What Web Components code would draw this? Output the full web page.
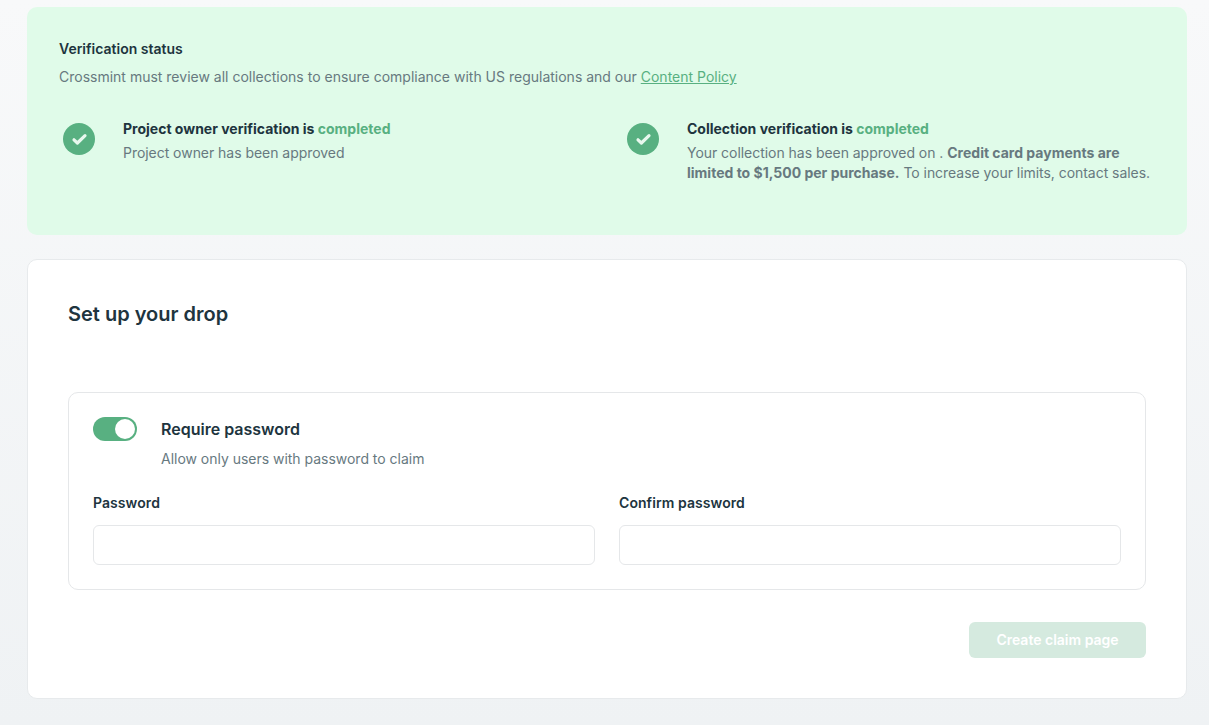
<!DOCTYPE html>
<html>
<head>
<meta charset="utf-8">
<title>Set up your drop</title>
<style>
html, body { height: 100%; }
body {
  margin: 0;
  height: 725px;
  overflow: hidden;
  box-sizing: border-box;
  padding: 7px 22px 0 27px;
  background: linear-gradient(180deg, #f8f9fa 0%, #eff2f4 100%);
  font-family: Inter, "Liberation Sans", sans-serif;
  color: #20343e;
}
</style>
</head>
<body>
<verification-banner>
  <status-item heading="Project owner verification is">Project owner has been approved</status-item>
  <status-item heading="Collection verification is">Your collection has been approved on . <b>Credit card payments are</b> <b>limited to $1,500 per purchase.</b> To increase your limits, contact sales.</status-item>
</verification-banner>
<drop-card heading="Set up your drop">
  <password-box></password-box>
  <primary-button slot="actions" disabled>Create claim page</primary-button>
</drop-card>

<script>
// ---- verification banner ----
class VerificationBanner extends HTMLElement {
  constructor() {
    super();
    this.attachShadow({ mode: 'open' }).innerHTML = `
      <style>
        :host {
          display: block;
          box-sizing: border-box;
          height: 228px;
          padding: 32px;
          background: #e0fbe9;
          border-radius: 10px;
        }
        h2 { margin: 0; font-size: 14px; line-height: 20px; font-weight: 600; color: #20343e; }
        p { margin: 8px 0 0; font-size: 14px; line-height: 20px; color: #67797f; }
        a { color: #58b081; text-decoration: underline; }
        .items { display: grid; grid-template-columns: 532px 532px; column-gap: 32px; margin-top: 32px; }
      </style>
      <h2>Verification status</h2>
      <p>Crossmint must review all collections to ensure compliance with US regulations and our <a href="#">Content Policy</a></p>
      <div class="items"><slot></slot></div>`;
  }
}

class StatusItem extends HTMLElement {
  constructor() {
    super();
    this.attachShadow({ mode: 'open' }).innerHTML = `
      <style>
        :host { display: flex; align-items: flex-start; font-size: 14px; line-height: 20px; color: #67797f; letter-spacing: -0.04px; }
        .icon { flex: none; width: 64px; padding: 4px 0 0 4px; box-sizing: border-box; }
        svg { display: block; width: 32px; height: 32px; }
        .heading { margin-bottom: 4px; font-weight: 700; color: #20343e; letter-spacing: 0; }
        .heading span { color: #58b081; }
        ::slotted(b) { font-weight: 700; letter-spacing: 0; }
      </style>
      <div class="icon">
        <svg viewBox="0 0 32 32">
          <circle cx="16" cy="16" r="16" fill="#58b081"/>
          <path d="M11 16.8l3.4 3.2 7.6-7.4" fill="none" stroke="#e8f8ee" stroke-width="3.2" stroke-linecap="round" stroke-linejoin="round"/>
        </svg>
      </div>
      <div>
        <div class="heading"><span class="lead"></span> <span>completed</span></div>
        <div><slot></slot></div>
      </div>`;
  }
  connectedCallback() {
    const lead = this.shadowRoot.querySelector('.lead');
    lead.textContent = this.getAttribute('heading');
    lead.style.color = '#20343e';
  }
}

// ---- drop card ----
class DropCard extends HTMLElement {
  constructor() {
    super();
    this.attachShadow({ mode: 'open' }).innerHTML = `
      <style>
        :host {
          display: block;
          box-sizing: border-box;
          height: 440px;
          margin-top: 24px;
          padding: 40px;
          background: #fff;
          border: 1px solid #e7eaec;
          border-radius: 10px;
        }
        h1 { margin: 0 0 64px; font-size: 20px; line-height: 28px; font-weight: 600; color: #20343e; }
        .actions { display: flex; justify-content: flex-end; margin-top: 32px; }
      </style>
      <h1></h1>
      <slot></slot>
      <div class="actions"><slot name="actions"></slot></div>`;
  }
  connectedCallback() {
    this.shadowRoot.querySelector('h1').textContent = this.getAttribute('heading');
  }
}

class PasswordBox extends HTMLElement {
  constructor() {
    super();
    this.attachShadow({ mode: 'open' }).innerHTML = `
      <style>
        :host {
          display: block;
          box-sizing: border-box;
          height: 198px;
          padding: 24px;
          border: 1px solid #e5e7e9;
          border-radius: 10px;
        }
        .top { display: flex; gap: 24px; }
        .title { font-size: 16px; line-height: 24px; font-weight: 600; color: #20343e; }
        .sub { margin-top: 6px; font-size: 14px; line-height: 24px; color: #67797f; letter-spacing: -0.02px; }
        .fields { display: grid; grid-template-columns: 1fr 1fr; column-gap: 24px; margin-top: 20px; }
      </style>
      <div class="top">
        <toggle-switch></toggle-switch>
        <div>
          <div class="title">Require password</div>
          <div class="sub">Allow only users with password to claim</div>
        </div>
      </div>
      <div class="fields">
        <text-field label="Password"></text-field>
        <text-field label="Confirm password"></text-field>
      </div>`;
  }
}

class ToggleSwitch extends HTMLElement {
  constructor() {
    super();
    this.attachShadow({ mode: 'open' }).innerHTML = `
      <style>
        :host {
          display: flex;
          justify-content: flex-end;
          align-items: center;
          box-sizing: border-box;
          width: 44px;
          height: 24px;
          padding-right: 2px;
          background: #58b081;
          border-radius: 12px;
        }
        i { display: block; width: 20px; height: 20px; border-radius: 50%; background: #fff; }
      </style>
      <i></i>`;
  }
}

class TextField extends HTMLElement {
  constructor() {
    super();
    this.attachShadow({ mode: 'open' }).innerHTML = `
      <style>
        :host { display: block; }
        label { display: block; font-size: 14px; line-height: 24px; font-weight: 600; letter-spacing: 0.07px; color: #20343e; }
        input {
          display: block;
          box-sizing: border-box;
          width: 100%;
          height: 40px;
          margin-top: 10px;
          border: 1px solid #e5e7e9;
          border-radius: 6px;
          background: #fff;
          outline: none;
        }
      </style>
      <label></label>
      <input type="password">`;
  }
  connectedCallback() {
    this.shadowRoot.querySelector('label').textContent = this.getAttribute('label');
  }
}

class PrimaryButton extends HTMLElement {
  constructor() {
    super();
    this.attachShadow({ mode: 'open' }).innerHTML = `
      <style>
        :host { display: block; }
        button {
          display: block;
          box-sizing: border-box;
          width: 177px;
          height: 36px;
          padding: 0;
          border: 0;
          border-radius: 6px;
          background: #d5eadf;
          color: #fff;
          font: 600 14px/20px Inter, "Liberation Sans", sans-serif;
        }
      </style>
      <button disabled><slot></slot></button>`;
  }
}

customElements.define('verification-banner', VerificationBanner);
customElements.define('status-item', StatusItem);
customElements.define('drop-card', DropCard);
customElements.define('password-box', PasswordBox);
customElements.define('toggle-switch', ToggleSwitch);
customElements.define('text-field', TextField);
customElements.define('primary-button', PrimaryButton);
</script>
</body>
</html>
